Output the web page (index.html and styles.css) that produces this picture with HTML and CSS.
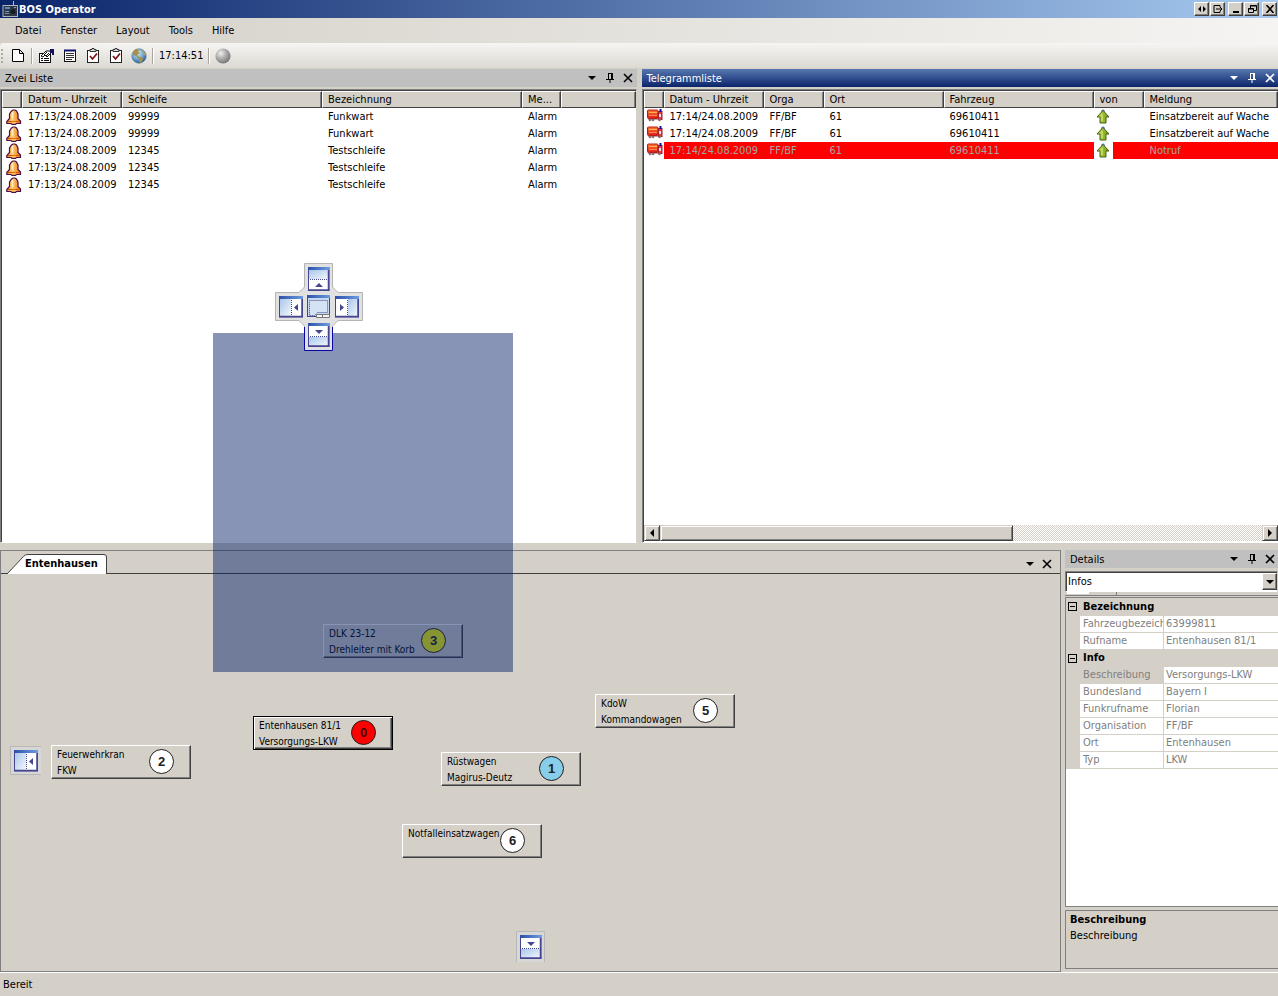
FILE: index.html
```html
<!DOCTYPE html>
<html lang="de">
<head>
<meta charset="utf-8">
<title>BOS Operator</title>
<link rel="stylesheet" href="styles.css">
</head>
<body>
<svg class="defs" aria-hidden="true">
  <defs>
    <linearGradient id="pane" x1="0" x2="1" y1="0" y2="1"><stop offset="0" stop-color="#a9c6ea"/><stop offset="1" stop-color="#f4f8fd"/></linearGradient>
    <linearGradient id="strip" x1="0" x2="1"><stop offset="0" stop-color="#2c50a8"/><stop offset="1" stop-color="#6c9ce0"/></linearGradient>
    <linearGradient id="bellfill" x1="0" x2="1"><stop offset="0" stop-color="#f88808"/><stop offset=".4" stop-color="#ffd080"/><stop offset="1" stop-color="#f07000"/></linearGradient>
    <radialGradient id="ballfill" cx=".36" cy=".32" r=".75"><stop offset="0" stop-color="#f0f0f0"/><stop offset=".45" stop-color="#b0b0b0"/><stop offset="1" stop-color="#707070"/></radialGradient>
    <radialGradient id="sea" cx=".4" cy=".3" r=".7"><stop offset="0" stop-color="#d4ecf8"/><stop offset=".6" stop-color="#6ba6d0"/><stop offset="1" stop-color="#2a5a90"/></radialGradient>
    <linearGradient id="leaf" x1="0" x2="1"><stop offset="0" stop-color="#c8e050"/><stop offset="1" stop-color="#6f9a10"/></linearGradient>
    <linearGradient id="paper" x1="0" x2="0" y1="0" y2="1"><stop offset="0" stop-color="#ff7830"/><stop offset="1" stop-color="#e01818"/></linearGradient>
  </defs>
  <symbol id="bell" viewBox="0 0 16 16">
    <path d="M5.500 2L7 1H9L10.500 2L12 5V9.500L14.500 12V14.500H10.500L9.500 15.300H6L5 14.500H.8V12.500L3.500 9.500V5Z" fill="url(#bellfill)" stroke="#48104c" stroke-width="1.200"/>
    <path d="M2 12.500H13.500" stroke="#d85000"/><path d="M6.500 3V9.500" stroke="#fff0c0" stroke-width="1.500"/><path d="M6 13.500H10" stroke="#ffc848" stroke-width="1.500"/>
  </symbol>
  <symbol id="truck" viewBox="0 0 16 13">
    <rect x=".5" y="1" width="10.500" height="8.500" rx="1" fill="url(#paper)" stroke="#b81818"/>
    <path d="M2 3.500H10" stroke="#ffb050"/><path d="M2 6.500H10" stroke="#ff8858"/>
    <rect x="11.500" y="2.500" width="3.500" height="8" fill="#e83838" stroke="#a02030"/><rect x="12" y="5" width="2" height="3" fill="#ffe0d8"/>
    <rect x="12.500" y="0" width="2" height="3" fill="#1010a0"/><path d="M1 10.500H11" stroke="#c0a0a0"/><circle cx="3" cy="11" r="1.300" fill="#887070"/><circle cx="6" cy="11" r="1.300" fill="#887070"/><circle cx="12.500" cy="11" r="1.300" fill="#887070"/>
  </symbol>
  <symbol id="up" viewBox="0 0 14 16"><path d="M7 1.500L13 8H10V14H4V8H1Z" fill="url(#leaf)" stroke="#486018"/><path d="M6 5V12" stroke="#e0ee90"/><path d="M5 2.500L7 .8L9 2.500" stroke="#305878" fill="none"/></symbol>
  <symbol id="down-tri" viewBox="0 0 8 4"><path d="M0 0H8L4 4Z" fill="currentColor"/></symbol>
  <symbol id="pin" viewBox="0 0 8 10"><path d="M2 .5H6.500M2.500 0V6M5.500 0V6M6.500 0V6M0 6.500H8M4 7V10" fill="none" stroke="currentColor"/></symbol>
  <symbol id="cross" viewBox="0 0 10 10"><path d="M1 1L9 9M9 1L1 9" stroke="currentColor" stroke-width="1.600"/></symbol>
  <symbol id="check" viewBox="0 0 14 15"><rect x="1.500" y="2.500" width="11" height="12" fill="#fff" stroke="#222"/><path d="M4 3.500V1.500H6V.5H8V1.500H10V3.500Z" fill="#ddd" stroke="#333"/><path d="M4 8L6.500 11L11 5.500" fill="none" stroke="#7c1010" stroke-width="1.700"/></symbol>
  <symbol id="dock-left" viewBox="0 0 24 22"><rect x=".5" y=".5" width="23" height="20.500" fill="#fff" stroke="#464690"/><rect x="1" y="3" width="11" height="17" fill="url(#pane)"/><path d="M0 1.500H24" stroke="url(#strip)" stroke-width="0"/><rect width="24" height="3" fill="url(#strip)"/><path d="M0 20.500H24M23 3V21" stroke="#464690" stroke-width="1.500"/><path d="M12.500 4V20" stroke="#464690" stroke-dasharray="1 1"/><path d="M19 8V15L15 11.500Z" fill="#464690"/></symbol>
  <symbol id="dock-right" viewBox="0 0 24 22"><rect x=".5" y=".5" width="23" height="20.500" fill="#fff" stroke="#464690"/><rect x="13" y="3" width="10" height="17" fill="url(#pane)"/><rect width="24" height="3" fill="url(#strip)"/><path d="M0 20.500H24M23 3V21" stroke="#464690" stroke-width="1.500"/><path d="M12.500 4V20" stroke="#464690" stroke-dasharray="1 1"/><path d="M5 8V15L9 11.500Z" fill="#464690"/></symbol>
  <symbol id="dock-up" viewBox="0 0 22 24"><rect x=".5" y=".5" width="20.500" height="23" fill="#fff" stroke="#464690"/><rect x="1" y="3" width="20" height="9" fill="url(#pane)"/><rect width="21.500" height="3" fill="url(#strip)"/><path d="M0 23H21.500M20.500 3V23" stroke="#464690" stroke-width="1.500"/><path d="M2 12.500H20" stroke="#464690" stroke-dasharray="1 1"/><path d="M7 20H15L11 16Z" fill="#464690"/></symbol>
  <symbol id="dock-down" viewBox="0 0 22 24"><rect x=".5" y=".5" width="20.500" height="23" fill="#fff" stroke="#464690"/><rect x="1" y="14" width="20" height="9" fill="url(#pane)"/><rect width="21.500" height="3" fill="url(#strip)"/><path d="M0 23H21.500M20.500 3V23" stroke="#464690" stroke-width="1.500"/><path d="M2 13.500H20" stroke="#464690" stroke-dasharray="1 1"/><path d="M7 7H15L11 11Z" fill="#464690"/></symbol>
</svg>

<header class="titlebar">
  <svg class="app-icon" width="16" height="16" viewBox="0 0 16 16"><path d="M11.500 0V5" stroke="#bbb"/><rect x="1" y="4.500" width="14.500" height="11" fill="#303848" stroke="#b0b4bc"/><rect x="3" y="6" width="5" height="2" fill="#5888c0"/><circle cx="11" cy="10.500" r="2.500" fill="#181c24"/><rect x="12" y="6" width="2" height="1" fill="#8898b0"/><path d="M3 10.500H7M3 12.500H7" stroke="#7890a8"/></svg>
  <h1 class="app-title">BOS Operator</h1>
  <div class="window-buttons">
    <button class="win-btn" aria-label="Verschieben"><svg width="10" height="8" viewBox="0 0 10 8"><path d="M4 1V7L1 4ZM6 1V7L9 4Z"/></svg></button>
    <button class="win-btn spaced" aria-label="Monitor"><svg width="10" height="8" viewBox="0 0 10 8"><path d="M7 2V.5H1V7.500H7V6M3 4H9M7 2L9 4L7 6" fill="none" stroke="#000"/></svg></button>
    <button class="win-btn" aria-label="Minimieren"><svg width="10" height="8" viewBox="0 0 10 8"><path d="M2 6H8V8H2Z"/></svg></button>
    <button class="win-btn spaced" aria-label="Wiederherstellen"><svg width="10" height="8" viewBox="0 0 10 8"><path d="M3.500 3V.5H9.500V5.500H7M1.500 3.500H6.500V7.500H1.500ZM3 1H10M1 4H7" fill="none" stroke="#000"/></svg></button>
    <button class="win-btn" aria-label="Schließen"><svg width="10" height="8" viewBox="0 0 10 8"><path d="M1.500 0L8.500 8M8.500 0L1.500 8" stroke="#000" stroke-width="1.600"/></svg></button>
  </div>
</header>

<nav class="menubar" aria-label="Menü">
  <button class="menu">Datei</button><button class="menu">Fenster</button><button class="menu">Layout</button><button class="menu">Tools</button><button class="menu">Hilfe</button>
</nav>

<div class="toolbar" role="toolbar" aria-label="Werkzeuge">
  <span class="grip"></span>
  <button class="tool" aria-label="Neu"><svg width="16" height="16" viewBox="0 0 16 16"><path d="M2.500 1.500H9.500L13.500 5.500V13.500H2.500ZM9.500 1.500V5.500H13.500" fill="#fff" stroke="#000"/></svg></button>
  <span class="sep"></span>
  <button class="tool" aria-label="Eigenschaften"><svg width="17" height="16" viewBox="0 0 17 16"><rect x="1.500" y="5.500" width="11" height="9" fill="#fff" stroke="#111"/><path d="M3 10.500H5M6 10.500H11M3 12.500H5M6 12.500H11" stroke="#111"/><path d="M3 8L8 3H12L13 5L9 9L7 7L5 9Z" fill="#fff" stroke="#111"/><path d="M6 7L9 4M8 8L11 5" stroke="#111"/><path d="M12 1H16V7H14V5H12Z" fill="#101060"/></svg></button>
  <button class="tool" aria-label="Liste"><svg width="14" height="16" viewBox="0 0 14 16"><rect x="1.500" y="2.500" width="11" height="11" fill="#fff" stroke="#111"/><path d="M1 2.500H13" stroke="#101070" stroke-width="2"/><path d="M3 5.500H11M3 7.500H11M3 9.500H11M3 11.500H9" stroke="#333"/></svg></button>
  <button class="tool" aria-label="Prüfen"><svg width="14" height="15"><use href="#check"/></svg></button>
  <button class="tool" aria-label="Bestätigen"><svg width="14" height="15"><use href="#check"/></svg></button>
  <button class="tool" aria-label="Karte"><svg width="16" height="16" viewBox="0 0 16 16"><circle cx="8" cy="8" r="7.200" fill="url(#sea)" stroke="#587890" stroke-width=".7"/><path d="M2 3L5 1L8 2L7 4L9 5L6 7L8 9L11 9L12 11L10 15L8 14L8 11L5 8L2 7Z" fill="#a89048"/><path d="M11 2L14 5L15 8L12 6Z" fill="#b8a060"/></svg></button>
  <span class="sep"></span>
  <time class="clock">17:14:51</time>
  <span class="sep"></span>
  <button class="tool" aria-label="Status"><svg width="16" height="16" viewBox="0 0 16 16"><circle cx="8" cy="8" r="7.600" fill="url(#ballfill)"/></svg></button>
</div>

<main class="workspace">
  <div class="row">
    <section class="panel grow">
      <header class="caption"><h2 class="caption-title">Zvei Liste</h2><div class="caption-tools"><button class="cap-btn" aria-label="Optionen"><svg width="8" height="4"><use href="#down-tri"/></svg></button><button class="cap-btn" aria-label="Anheften"><svg width="8" height="10"><use href="#pin"/></svg></button><button class="cap-btn" aria-label="Schließen"><svg width="10" height="10"><use href="#cross"/></svg></button></div></header>
      <div class="sunken">
        <table class="list">
          <colgroup><col class="w-icon"><col class="w-100"><col class="w-200"><col class="w-200"><col class="w-39"><col></colgroup>
          <thead><tr><th></th><th>Datum - Uhrzeit</th><th>Schleife</th><th>Bezeichnung</th><th>Me...</th><th></th></tr></thead>
          <tbody>
            <tr><td class="ico"><svg width="16" height="16"><use href="#bell"/></svg></td><td>17:13/24.08.2009</td><td>99999</td><td>Funkwart</td><td>Alarm</td><td></td></tr>
            <tr><td class="ico"><svg width="16" height="16"><use href="#bell"/></svg></td><td>17:13/24.08.2009</td><td>99999</td><td>Funkwart</td><td>Alarm</td><td></td></tr>
            <tr><td class="ico"><svg width="16" height="16"><use href="#bell"/></svg></td><td>17:13/24.08.2009</td><td>12345</td><td>Testschleife</td><td>Alarm</td><td></td></tr>
            <tr><td class="ico"><svg width="16" height="16"><use href="#bell"/></svg></td><td>17:13/24.08.2009</td><td>12345</td><td>Testschleife</td><td>Alarm</td><td></td></tr>
            <tr><td class="ico"><svg width="16" height="16"><use href="#bell"/></svg></td><td>17:13/24.08.2009</td><td>12345</td><td>Testschleife</td><td>Alarm</td><td></td></tr>
          </tbody>
        </table>
      </div>
    </section>
    <section class="panel grow">
      <header class="caption active"><h2 class="caption-title">Telegrammliste</h2><div class="caption-tools"><button class="cap-btn" aria-label="Optionen"><svg width="8" height="4"><use href="#down-tri"/></svg></button><button class="cap-btn" aria-label="Anheften"><svg width="8" height="10"><use href="#pin"/></svg></button><button class="cap-btn" aria-label="Schließen"><svg width="10" height="10"><use href="#cross"/></svg></button></div></header>
      <div class="sunken open-right">
        <table class="list">
          <colgroup><col class="w-icon"><col class="w-100"><col class="w-60"><col class="w-120"><col class="w-150"><col class="w-50"><col></colgroup>
          <thead><tr><th></th><th>Datum - Uhrzeit</th><th>Orga</th><th>Ort</th><th>Fahrzeug</th><th>von</th><th>Meldung</th></tr></thead>
          <tbody>
            <tr><td class="ico truck"><svg width="16" height="13"><use href="#truck"/></svg></td><td>17:14/24.08.2009</td><td>FF/BF</td><td>61</td><td>69610411</td><td class="arrow"><svg width="14" height="16"><use href="#up"/></svg></td><td>Einsatzbereit auf Wache</td></tr>
            <tr><td class="ico truck"><svg width="16" height="13"><use href="#truck"/></svg></td><td>17:14/24.08.2009</td><td>FF/BF</td><td>61</td><td>69610411</td><td class="arrow"><svg width="14" height="16"><use href="#up"/></svg></td><td>Einsatzbereit auf Wache</td></tr>
            <tr class="alert"><td class="ico truck"><svg width="16" height="13"><use href="#truck"/></svg></td><td>17:14/24.08.2009</td><td>FF/BF</td><td>61</td><td>69610411</td><td class="arrow"><svg width="14" height="16"><use href="#up"/></svg></td><td>Notruf</td></tr>
          </tbody>
        </table>
        <div class="hscroll">
          <button class="scroll-btn" aria-label="Nach links"><svg width="4" height="8" viewBox="0 0 4 8"><path d="M4 0V8L0 4Z"/></svg></button>
          <div class="track"><div class="thumb"></div></div>
          <button class="scroll-btn" aria-label="Nach rechts"><svg width="4" height="8" viewBox="0 0 4 8"><path d="M0 0V8L4 4Z"/></svg></button>
        </div>
      </div>
    </section>
  </div>

  <div class="row lower">
    <section class="document grow">
      <header class="tabbar">
        <button class="tab"><svg class="tab-shape" width="100" height="20" viewBox="0 0 100 20"><path d="M0 20L16.500 2.500Q18 .5 21 .5H97Q99.500 .5 99.500 3V20" fill="#fff" stroke="#404040"/></svg><span class="tab-text">Entenhausen</span></button>
        <div class="caption-tools"><button class="cap-btn" aria-label="Optionen"><svg width="8" height="4"><use href="#down-tri"/></svg></button><button class="cap-btn" aria-label="Schließen"><svg width="10" height="10"><use href="#cross"/></svg></button></div>
      </header>
      <div class="canvas">
        <button class="unit u-dlk">DLK 23-12<br>Drehleiter mit Korb<span class="status yellow">3</span></button>
        <button class="unit u-kdow">KdoW<br>Kommandowagen<span class="status">5</span></button>
        <button class="unit u-ent focused">Entenhausen 81/1<br>Versorgungs-LKW<span class="status red">0</span></button>
        <button class="unit u-kran">Feuerwehrkran<br>FKW<span class="status">2</span></button>
        <button class="unit u-ruest">Rüstwagen<br>Magirus-Deutz<span class="status blue">1</span></button>
        <button class="unit u-notfall">Notfalleinsatzwagen<br>&nbsp;<span class="status">6</span></button>
      </div>
    </section>
    <aside class="details">
      <header class="caption"><h2 class="caption-title">Details</h2><div class="caption-tools"><button class="cap-btn" aria-label="Optionen"><svg width="8" height="4"><use href="#down-tri"/></svg></button><button class="cap-btn" aria-label="Anheften"><svg width="8" height="10"><use href="#pin"/></svg></button><button class="cap-btn" aria-label="Schließen"><svg width="10" height="10"><use href="#cross"/></svg></button></div></header>
      <div class="combo"><select class="combo-select" aria-label="Ansicht"><option>Infos</option></select><span class="combo-arrow"><svg width="8" height="4"><use href="#down-tri"/></svg></span></div>
      <div class="strip"><span class="strip-on"></span><span class="strip-off"></span></div>
      <div class="propgrid">
        <table class="props">
          <colgroup><col class="w-gutter"><col class="w-name"><col></colgroup>
          <tbody>
            <tr class="cat"><td><button class="expander" aria-label="Bezeichnung einklappen"></button></td><th colspan="2">Bezeichnung</th></tr>
            <tr><td></td><th>Fahrzeugbezeich</th><td>63999811</td></tr>
            <tr><td></td><th>Rufname</th><td>Entenhausen 81/1</td></tr>
            <tr class="cat"><td><button class="expander" aria-label="Info einklappen"></button></td><th colspan="2">Info</th></tr>
            <tr class="selected"><td></td><th>Beschreibung</th><td>Versorgungs-LKW</td></tr>
            <tr><td></td><th>Bundesland</th><td>Bayern I</td></tr>
            <tr><td></td><th>Funkrufname</th><td>Florian</td></tr>
            <tr><td></td><th>Organisation</th><td>FF/BF</td></tr>
            <tr><td></td><th>Ort</th><td>Entenhausen</td></tr>
            <tr><td></td><th>Typ</th><td>LKW</td></tr>
          </tbody>
        </table>
      </div>
      <div class="help"><strong>Beschreibung</strong><span>Beschreibung</span></div>
    </aside>
  </div>
</main>

<footer class="statusbar">Bereit</footer>

<div class="drop-preview"></div>
<svg class="dock-guide" width="88" height="88" viewBox="0 0 88 88">
  <path d="M29.500 .5H57.500V24L63 29.500H87.500V57.500H63L57.500 63V87.500H29.500V63L24 57.500H.5V29.500H24L29.500 24Z" fill="#e2e1e1" stroke="#b4b4b4"/>
  <path d="M29.500 64V87.500H57.500V64" fill="none" stroke="#0808a8"/>
  <use href="#dock-up" x="33" y="4" width="22" height="24"/>
  <use href="#dock-left" x="4" y="33" width="24" height="22"/>
  <use href="#dock-right" x="60" y="33" width="24" height="22"/>
  <use href="#dock-down" x="33" y="60" width="22" height="24"/>
  <rect x="32.500" y="32.500" width="22" height="21" fill="#c6d9f0" stroke="#464690"/>
  <rect x="32" y="32" width="23" height="3" fill="url(#strip)"/><path d="M34.500 37.500H52.500V49.500H42.500L39.500 52.500H34.500Z" fill="#d4e2f4" stroke="#464690" stroke-dasharray="1 1"/>
  <path d="M41.500 54.500V51.500H54.500V54.500ZM47.500 51V54" fill="#f4f4f4" stroke="#777"/>
</svg>
<svg class="dock-edge edge-left" width="31" height="29" viewBox="0 0 31 29"><path d="M31 .5H.5V28.500H31" fill="#d8d7d8" stroke="#b8b8b8"/><use href="#dock-left" x="4" y="4" width="24" height="22"/></svg>
<svg class="dock-edge edge-bottom" width="29" height="31" viewBox="0 0 29 31"><path d="M.5 31V.5H28.500V31" fill="#d8d7d8" stroke="#b8b8b8"/><use href="#dock-down" x="4" y="4" width="22" height="24"/></svg>
</body>
</html>
```
FILE: styles.css
```css
* { box-sizing: border-box; }
body {
  margin: 0; min-height: 100vh; display: flex; flex-direction: column; position: relative; overflow: hidden;
  background: #d4d0c8; color: #000;
  font-family: "DejaVu Sans Condensed", "Noto Sans", sans-serif; font-size: 11px; line-height: 17px;
}
button, select { font: inherit; color: inherit; margin: 0; padding: 0; border: 0; background: none; border-radius: 0; }
h1, h2 { margin: 0; font-size: inherit; font-weight: normal; }
svg { display: block; flex: none; }
.defs { position: absolute; width: 0; height: 0; }

.titlebar { height: 18px; display: flex; align-items: center; gap: 1px; padding: 0 1px 0 2px; background: linear-gradient(90deg, #0a246a, #a6caf0); }
.titlebar .app-title { flex: 1; color: #fff; font-weight: bold; font-size: 11px; }
.window-buttons { display: flex; gap: 1px; }
.win-btn { width: 15px; height: 14px; display: flex; align-items: center; justify-content: center; background: #d4d0c8; border: 1px solid; border-color: #fff #404040 #404040 #fff; box-shadow: inset -1px -1px #808080; }
.win-btn.spaced { margin-right: 2px; }

.menubar { height: 25px; display: flex; align-items: center; padding-left: 7px; background: linear-gradient(90deg, #d4d0c8, #f5f4f2); }
.menu { padding: 0 8px; margin-right: 3px; line-height: 20px; }

.toolbar { height: 25px; display: flex; align-items: center; gap: 7px; padding-left: 1px; background: linear-gradient(#f6f5f3, #dcd9d2); border-radius: 3px 0 0 3px; }
.grip { width: 2px; height: 14px; background: repeating-linear-gradient(#b0aca4 0 2px, transparent 2px 4px); }
.tool { display: flex; min-width: 16px; justify-content: center; }
.sep { width: 2px; height: 16px; margin: 0 -2px; background: #aaa69e; border-right: 1px solid #fff; }

.workspace { flex: 1; display: grid; grid-template-rows: 476fr 422fr; gap: 6px; }
.row { display: flex; gap: 5px; min-height: 0; }
.lower { gap: 4px; }
.grow { flex: 1; min-width: 0; }
.panel { display: flex; flex-direction: column; padding-bottom: 1px; }
.caption { height: 18px; flex: none; display: flex; align-items: center; justify-content: space-between; padding: 0 1px 0 5px; background: #c0c0c0; }
.panel .caption { margin-top: 1px; }
.caption.active { color: #fff; background: linear-gradient(#5878b0, #0a246a); }
.caption-tools { display: flex; gap: 3px; }
.cap-btn { width: 15px; height: 15px; display: flex; align-items: center; justify-content: center; }

.sunken { flex: 1; display: flex; flex-direction: column; justify-content: space-between; margin-top: 2px; background: #fff; border: 1px solid; border-color: #808080 #d4d0c8 #fff #808080; box-shadow: inset 1px 1px #404040; padding: 1px 0 1px 1px; }
.open-right { border-right: 0; }
.list { width: 100%; table-layout: fixed; border-collapse: separate; border-spacing: 0; }
.list th { height: 17px; line-height: 15px; padding: 0 5px; text-align: left; font-weight: normal; background: #d4d0c8; border: 1px solid; border-color: #fff #404040 #404040 #fff; box-shadow: inset -1px 0 #808080; white-space: nowrap; overflow: hidden; }
.list td { height: 17px; line-height: 17px; padding: 0 6px; white-space: nowrap; overflow: hidden; }
.list td.ico { padding: 0 0 0 4px; }
.list td.truck { padding: 0 0 2px 3px; }
.list td.arrow { padding: 0 0 0 2px; }
.w-icon { width: 20px; }
.w-39 { width: 39px; }
.w-50 { width: 50px; }
.w-60 { width: 60px; }
.w-100 { width: 100px; }
.w-120 { width: 120px; }
.w-150 { width: 150px; }
.w-200 { width: 200px; }
.list .alert td { color: #a0a8a4; background: #f00; }
.list .alert td.ico { background: #fff; }
.list .alert td.arrow { background: linear-gradient(90deg, #fff 19px, #f00 19px); }

.hscroll { display: flex; height: 16px; }
.scroll-btn { width: 16px; display: flex; align-items: center; justify-content: center; }
.scroll-btn, .thumb { background: #d4d0c8; border: 1px solid; border-color: #d4d0c8 #404040 #404040 #d4d0c8; box-shadow: inset 1px 1px #fff, inset -1px -1px #808080; }
.track { flex: 1; background: repeating-conic-gradient(#fff 0 25%, #d4d0c8 0 50%) 0 0 / 2px 2px; }
.thumb { width: 58.6%; height: 100%; }

.document { display: flex; flex-direction: column; border: 1px solid #808080; }
.tabbar { height: 23px; display: flex; align-items: flex-end; justify-content: space-between; padding: 0 6px 0 6px; border-bottom: 1px solid #404040; }
.tabbar .caption-tools { padding-bottom: 2px; gap: 2px; }
.tab { position: relative; width: 100px; height: 20px; margin-bottom: -1px; font-weight: bold; line-height: 18px; text-align: left; padding-left: 18px; }
.tab-shape { position: absolute; left: 0; top: 0; }
.tab-text { position: relative; }
.canvas { flex: 1; position: relative; }

.unit { position: absolute; width: 140px; height: 34px; padding: 1px 5px; text-align: left; font-size: 10px; line-height: 16px; white-space: nowrap; display: block; background: #d4d0c8; border: 1px solid; border-color: #fff #404040 #404040 #fff; box-shadow: inset -1px -1px #808080; }
.unit.focused { border-color: #000; box-shadow: inset 1px 1px #fff, inset -1px -1px #404040, inset -2px -2px #808080; }
.status { position: absolute; left: 97px; top: 3px; width: 25px; height: 25px; border: 1px solid #202020; border-radius: 50%; background: #fff; text-align: center; font: bold 13px/23px "Liberation Sans", sans-serif; color: #202020; }
.status.red { background: #f00; color: #400; }
.status.blue { background: #87ceeb; }
.status.yellow { background: #ffff00; }
.u-dlk { left: 322px; top: 50px; }
.u-kdow { left: 594px; top: 120px; }
.u-ent { left: 252px; top: 142px; }
.u-kran { left: 50px; top: 171px; }
.u-ruest { left: 440px; top: 178px; }
.u-notfall { left: 401px; top: 250px; }

.details { width: 213px; display: flex; flex-direction: column; padding-bottom: 3px; }
.combo { position: relative; margin-top: 3px; height: 21px; border: 1px solid; border-color: #808080 #d4d0c8 #fff #808080; box-shadow: inset 1px 1px #404040; background: #fff; }
.combo-select { appearance: none; width: 100%; height: 19px; padding-left: 2px; outline: 0; }
.combo-arrow { position: absolute; right: 0; top: 1px; width: 15px; height: 17px; display: flex; align-items: center; justify-content: center; pointer-events: none; background: #d4d0c8; border: 1px solid; border-color: #fff #404040 #404040 #fff; box-shadow: inset -1px -1px #808080; }
.strip { height: 4px; display: flex; border-bottom: 1px solid #808080; padding-left: 2px; margin-bottom: 1px; }
.strip-on { width: 22px; height: 2px; background: #fff; }
.strip-off { width: 28px; height: 3px; border-right: 1px solid #808080; }
.propgrid { flex: 1; background: #fff; border: 1px solid #808080; border-right: 0; overflow: hidden; }
.props { width: 100%; table-layout: fixed; border-collapse: separate; border-spacing: 0; color: #808080; }
.w-gutter { width: 14px; }
.w-name { width: 84px; }
.props th, .props td { height: 17px; line-height: 16px; padding: 0 0 0 2px; text-align: left; font-weight: normal; white-space: nowrap; overflow: hidden; border-bottom: 1px solid #d4d0c8; }
.props th { padding-left: 3px; border-right: 1px solid #d4d0c8; }
.props td:first-child { background: #d4d0c8; }
.props .cat th { height: 18px; line-height: 17px; font-weight: bold; color: #000; background: #d4d0c8; }
.props .cat ~ .cat th { height: 17px; line-height: 16px; }
.props .selected th { background: #d4d0c8; }
.expander { display: block; width: 9px; height: 9px; border: 1px solid #000; background: linear-gradient(#000, #000) center / 5px 1px no-repeat; }
.help { height: 59px; flex: none; margin-top: 3px; padding: 1px 4px; display: flex; flex-direction: column; line-height: 16px; border: 1px solid #808080; border-right: 0; }

.statusbar { height: 24px; padding: 3px; border-top: 1px solid #fff; }

.drop-preview { position: absolute; left: 213px; top: 333px; width: 300px; height: 339px; background: rgba(10, 36, 106, .49); }
.dock-guide { position: absolute; left: 275px; top: 263px; }
.dock-edge { position: absolute; }
.edge-left { left: 10px; top: 746px; }
.edge-bottom { left: 516px; top: 931px; }
```
